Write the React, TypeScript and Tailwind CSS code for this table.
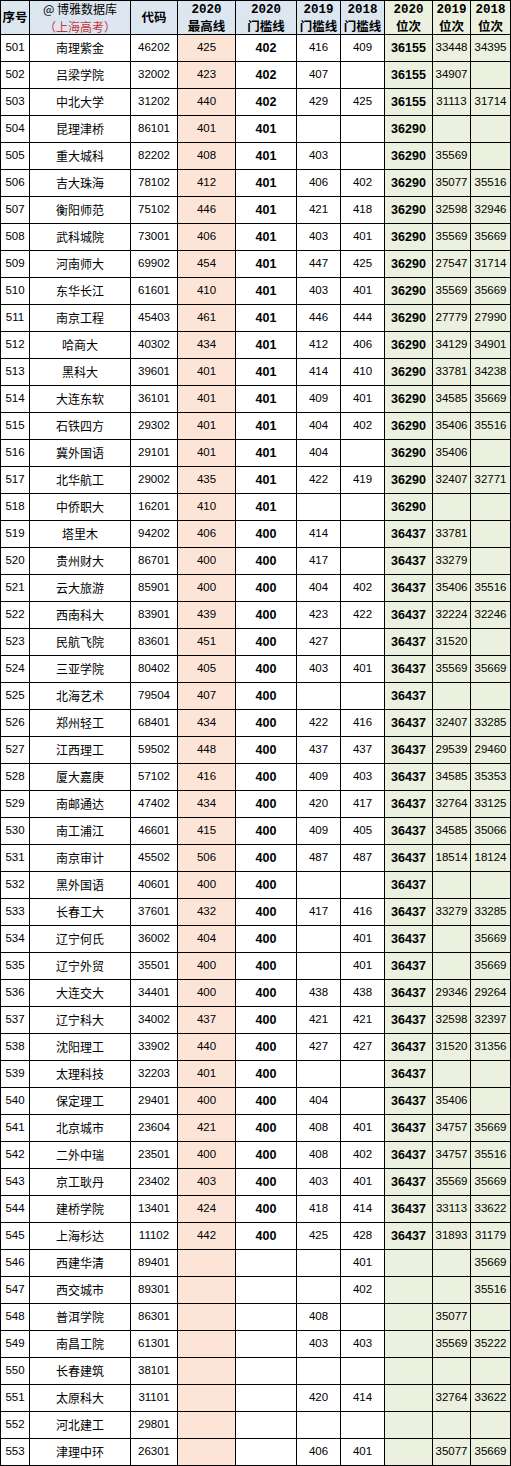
import React from 'react';

type Row = [string, string, string, string, string, string, string, string, string, string];

// 序号, 名称, 代码, 2020最高线, 2020门槛线, 2019门槛线, 2018门槛线, 2020位次, 2019位次, 2018位次
const rows: Row[] = [
  ['501', '南理紫金', '46202', '425', '402', '416', '409', '36155', '33448', '34395'],
  ['502', '吕梁学院', '32002', '423', '402', '407', '', '36155', '34907', ''],
  ['503', '中北大学', '31202', '440', '402', '429', '425', '36155', '31113', '31714'],
  ['504', '昆理津桥', '86101', '401', '401', '', '', '36290', '', ''],
  ['505', '重大城科', '82202', '408', '401', '403', '', '36290', '35569', ''],
  ['506', '吉大珠海', '78102', '412', '401', '406', '402', '36290', '35077', '35516'],
  ['507', '衡阳师范', '75102', '446', '401', '421', '418', '36290', '32598', '32946'],
  ['508', '武科城院', '73001', '406', '401', '403', '401', '36290', '35569', '35669'],
  ['509', '河南师大', '69902', '454', '401', '447', '425', '36290', '27547', '31714'],
  ['510', '东华长江', '61601', '410', '401', '403', '401', '36290', '35569', '35669'],
  ['511', '南京工程', '45403', '461', '401', '446', '444', '36290', '27779', '27990'],
  ['512', '哈商大', '40302', '434', '401', '412', '406', '36290', '34129', '34901'],
  ['513', '黑科大', '39601', '401', '401', '414', '410', '36290', '33781', '34238'],
  ['514', '大连东软', '36101', '401', '401', '409', '401', '36290', '34585', '35669'],
  ['515', '石铁四方', '29302', '401', '401', '404', '402', '36290', '35406', '35516'],
  ['516', '冀外国语', '29101', '401', '401', '404', '', '36290', '35406', ''],
  ['517', '北华航工', '29002', '435', '401', '422', '419', '36290', '32407', '32771'],
  ['518', '中侨职大', '16201', '410', '401', '', '', '36290', '', ''],
  ['519', '塔里木', '94202', '406', '400', '414', '', '36437', '33781', ''],
  ['520', '贵州财大', '86701', '400', '400', '417', '', '36437', '33279', ''],
  ['521', '云大旅游', '85901', '400', '400', '404', '402', '36437', '35406', '35516'],
  ['522', '西南科大', '83901', '439', '400', '423', '422', '36437', '32224', '32246'],
  ['523', '民航飞院', '83601', '451', '400', '427', '', '36437', '31520', ''],
  ['524', '三亚学院', '80402', '405', '400', '403', '401', '36437', '35569', '35669'],
  ['525', '北海艺术', '79504', '407', '400', '', '', '36437', '', ''],
  ['526', '郑州轻工', '68401', '434', '400', '422', '416', '36437', '32407', '33285'],
  ['527', '江西理工', '59502', '448', '400', '437', '437', '36437', '29539', '29460'],
  ['528', '厦大嘉庚', '57102', '416', '400', '409', '403', '36437', '34585', '35353'],
  ['529', '南邮通达', '47402', '434', '400', '420', '417', '36437', '32764', '33125'],
  ['530', '南工浦江', '46601', '415', '400', '409', '405', '36437', '34585', '35066'],
  ['531', '南京审计', '45502', '506', '400', '487', '487', '36437', '18514', '18124'],
  ['532', '黑外国语', '40601', '400', '400', '', '', '36437', '', ''],
  ['533', '长春工大', '37601', '432', '400', '417', '416', '36437', '33279', '33285'],
  ['534', '辽宁何氏', '36002', '404', '400', '', '401', '36437', '', '35669'],
  ['535', '辽宁外贸', '35501', '400', '400', '', '401', '36437', '', '35669'],
  ['536', '大连交大', '34401', '400', '400', '438', '438', '36437', '29346', '29264'],
  ['537', '辽宁科大', '34002', '437', '400', '421', '421', '36437', '32598', '32397'],
  ['538', '沈阳理工', '33902', '440', '400', '427', '427', '36437', '31520', '31356'],
  ['539', '太理科技', '32203', '401', '400', '', '', '36437', '', ''],
  ['540', '保定理工', '29401', '400', '400', '404', '', '36437', '35406', ''],
  ['541', '北京城市', '23604', '421', '400', '408', '401', '36437', '34757', '35669'],
  ['542', '二外中瑞', '23501', '400', '400', '408', '402', '36437', '34757', '35516'],
  ['543', '京工耿丹', '23402', '403', '400', '403', '401', '36437', '35569', '35669'],
  ['544', '建桥学院', '13401', '424', '400', '418', '414', '36437', '33113', '33622'],
  ['545', '上海杉达', '11102', '442', '400', '425', '428', '36437', '31893', '31179'],
  ['546', '西建华清', '89401', '', '', '', '401', '', '', '35669'],
  ['547', '西交城市', '89301', '', '', '', '402', '', '', '35516'],
  ['548', '普洱学院', '86301', '', '', '408', '', '', '35077', ''],
  ['549', '南昌工院', '61301', '', '', '403', '403', '', '35569', '35222'],
  ['550', '长春建筑', '38101', '', '', '', '', '', '', ''],
  ['551', '太原科大', '31101', '', '', '420', '414', '', '32764', '33622'],
  ['552', '河北建工', '29801', '', '', '', '', '', '', ''],
  ['553', '津理中环', '26301', '', '', '406', '401', '', '35077', '35669'],
];

const cjk = "font-['Noto_Sans_CJK_SC',sans-serif]";
const num = "font-['Liberation_Sans','Noto_Sans_CJK_SC',sans-serif]";
const year = "font-['Liberation_Mono',monospace] font-bold text-[12.5px] leading-[15px]";

const cell = 'flex items-center justify-center border-r border-b border-black text-black';

const YearHead = ({ y, label, green }: { y: string; label: string; green?: boolean }) => (
  <div className={`${cell} flex-col ${green ? 'bg-[#ebf1de]' : 'bg-[#dce6f1]'}`}>
    <span className={year}>{y}</span>
    <span className={`${cjk} font-bold text-[12.5px] leading-[15px]`}>{label}</span>
  </div>
);

export default function App() {
  return (
    <div className="w-[511px] bg-white">
      <div className="grid grid-cols-[29px_101px_47px_58px_61px_44px_44px_48px_38px_40px] grid-rows-[34px] auto-rows-[27px] border-l border-t border-black">
        {/* header */}
        <div className={`${cell} bg-[#dce6f1] ${cjk} font-bold text-[12.5px]`}>序号</div>
        <div className={`${cell} flex-col bg-[#dce6f1] ${cjk} text-[12px] leading-[17.5px]`}>
          <span>@ 博雅数据库</span>
          <span className="text-[#c8363a]">（上海高考）</span>
        </div>
        <div className={`${cell} bg-[#dce6f1] ${cjk} font-bold text-[12.5px]`}>代码</div>
        <div className={`${cell} flex-col bg-[#dce6f1] text-[#c00000]`}>
          <span className={year}>2020</span>
          <span className={`${cjk} font-bold text-[12.5px] leading-[15px]`}>最高线</span>
        </div>
        <YearHead y="2020" label="门槛线" />
        <YearHead y="2019" label="门槛线" />
        <YearHead y="2018" label="门槛线" />
        <YearHead y="2020" label="位次" green />
        <YearHead y="2019" label="位次" green />
        <YearHead y="2018" label="位次" green />

        {rows.map((r) => (
          <React.Fragment key={r[0]}>
            <div className={`${cell} ${num} text-[11.5px]`}>{r[0]}</div>
            <div className={`${cell} ${cjk} text-[12px]`}>{r[1]}</div>
            <div className={`${cell} ${num} text-[11.5px]`}>{r[2]}</div>
            <div className={`${cell} ${num} text-[11.5px] bg-[#fce4d6]`}>{r[3]}</div>
            <div className={`${cell} ${num} text-[12.5px] font-bold`}>{r[4]}</div>
            <div className={`${cell} ${num} text-[11.5px]`}>{r[5]}</div>
            <div className={`${cell} ${num} text-[11.5px]`}>{r[6]}</div>
            <div className={`${cell} ${num} text-[12.5px] font-bold bg-[#ebf1de]`}>{r[7]}</div>
            <div className={`${cell} ${num} text-[11.5px] bg-[#ebf1de]`}>{r[8]}</div>
            <div className={`${cell} ${num} text-[11.5px] bg-[#ebf1de]`}>{r[9]}</div>
          </React.Fragment>
        ))}
      </div>
    </div>
  );
}
